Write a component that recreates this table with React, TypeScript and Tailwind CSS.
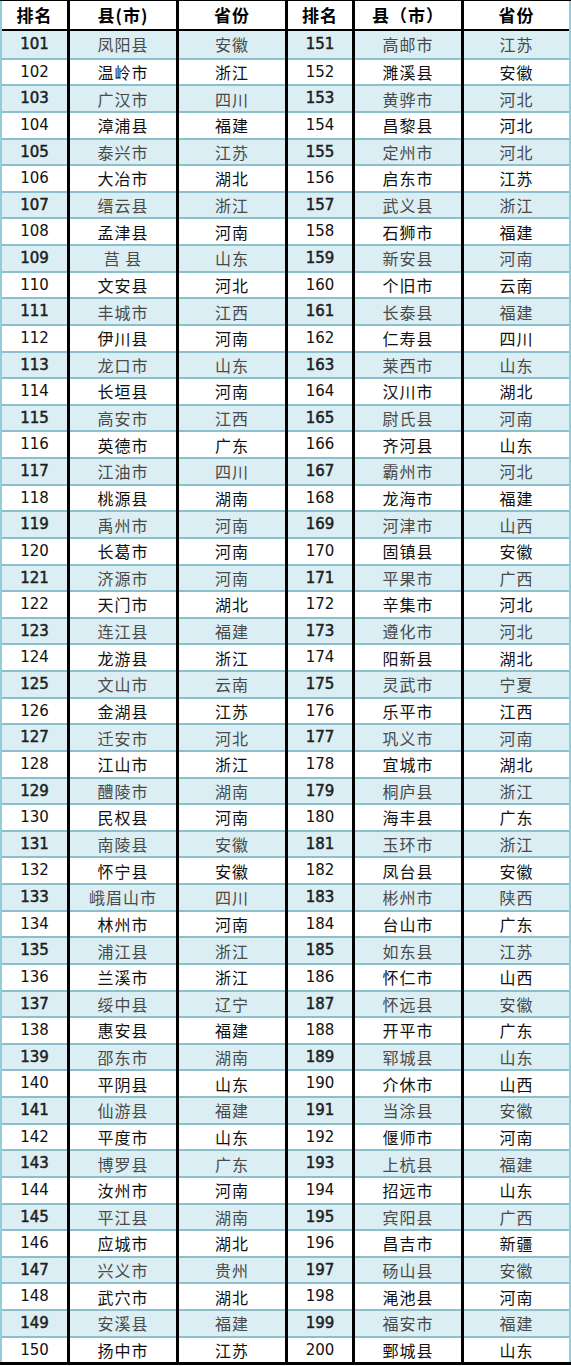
const left: [string, string, string][] = [
  ['101', '凤阳县', '安徽'], ['102', '温岭市', '浙江'], ['103', '广汉市', '四川'], ['104', '漳浦县', '福建'],
  ['105', '泰兴市', '江苏'], ['106', '大冶市', '湖北'], ['107', '缙云县', '浙江'], ['108', '孟津县', '河南'],
  ['109', '莒 县', '山东'], ['110', '文安县', '河北'], ['111', '丰城市', '江西'], ['112', '伊川县', '河南'],
  ['113', '龙口市', '山东'], ['114', '长垣县', '河南'], ['115', '高安市', '江西'], ['116', '英德市', '广东'],
  ['117', '江油市', '四川'], ['118', '桃源县', '湖南'], ['119', '禹州市', '河南'], ['120', '长葛市', '河南'],
  ['121', '济源市', '河南'], ['122', '天门市', '湖北'], ['123', '连江县', '福建'], ['124', '龙游县', '浙江'],
  ['125', '文山市', '云南'], ['126', '金湖县', '江苏'], ['127', '迁安市', '河北'], ['128', '江山市', '浙江'],
  ['129', '醴陵市', '湖南'], ['130', '民权县', '河南'], ['131', '南陵县', '安徽'], ['132', '怀宁县', '安徽'],
  ['133', '峨眉山市', '四川'], ['134', '林州市', '河南'], ['135', '浦江县', '浙江'], ['136', '兰溪市', '浙江'],
  ['137', '绥中县', '辽宁'], ['138', '惠安县', '福建'], ['139', '邵东市', '湖南'], ['140', '平阴县', '山东'],
  ['141', '仙游县', '福建'], ['142', '平度市', '山东'], ['143', '博罗县', '广东'], ['144', '汝州市', '河南'],
  ['145', '平江县', '湖南'], ['146', '应城市', '湖北'], ['147', '兴义市', '贵州'], ['148', '武穴市', '湖北'],
  ['149', '安溪县', '福建'], ['150', '扬中市', '江苏'],
];

const right: [string, string, string][] = [
  ['151', '高邮市', '江苏'], ['152', '濉溪县', '安徽'], ['153', '黄骅市', '河北'], ['154', '昌黎县', '河北'],
  ['155', '定州市', '河北'], ['156', '启东市', '江苏'], ['157', '武义县', '浙江'], ['158', '石狮市', '福建'],
  ['159', '新安县', '河南'], ['160', '个旧市', '云南'], ['161', '长泰县', '福建'], ['162', '仁寿县', '四川'],
  ['163', '莱西市', '山东'], ['164', '汉川市', '湖北'], ['165', '尉氏县', '河南'], ['166', '齐河县', '山东'],
  ['167', '霸州市', '河北'], ['168', '龙海市', '福建'], ['169', '河津市', '山西'], ['170', '固镇县', '安徽'],
  ['171', '平果市', '广西'], ['172', '辛集市', '河北'], ['173', '遵化市', '河北'], ['174', '阳新县', '湖北'],
  ['175', '灵武市', '宁夏'], ['176', '乐平市', '江西'], ['177', '巩义市', '河南'], ['178', '宜城市', '湖北'],
  ['179', '桐庐县', '浙江'], ['180', '海丰县', '广东'], ['181', '玉环市', '浙江'], ['182', '凤台县', '安徽'],
  ['183', '彬州市', '陕西'], ['184', '台山市', '广东'], ['185', '如东县', '江苏'], ['186', '怀仁市', '山西'],
  ['187', '怀远县', '安徽'], ['188', '开平市', '广东'], ['189', '郓城县', '山东'], ['190', '介休市', '山西'],
  ['191', '当涂县', '安徽'], ['192', '偃师市', '河南'], ['193', '上杭县', '福建'], ['194', '招远市', '山东'],
  ['195', '宾阳县', '广西'], ['196', '昌吉市', '新疆'], ['197', '砀山县', '安徽'], ['198', '渑池县', '河南'],
  ['199', '福安市', '福建'], ['200', '鄄城县', '山东'],
];

const cjk = "font-['Noto_Sans_CJK_SC','Noto_Sans',sans-serif]";

interface ColumnProps {
  title: string;
  values: string[];
  numeric?: boolean;
  className: string;
}

function Column({ title, values, numeric, className }: ColumnProps) {
  return (
    <div className={`flex flex-col shrink-0 ${className}`}>
      <div
        className={`h-[30px] flex items-center justify-center border-b-2 border-black bg-white text-[17px] font-bold tracking-[1px] text-black ${cjk}`}
      >
        {title}
      </div>
      {values.map((v, i) => {
        const odd = i % 2 === 0;
        return (
          <div
            key={i}
            className={`h-[26.64px] flex items-center justify-center ${
              i > 0 ? 'border-t-2 border-[#8cbfcc]' : ''
            } ${odd ? 'bg-[#daeef3]' : 'bg-white'} ${
              numeric
                ? `font-['DejaVu_Sans',sans-serif] text-[15px] ${
                    odd ? 'text-[#1e1e1e] [-webkit-text-stroke:0.5px_#1e1e1e]' : 'text-[#111]'
                  }`
                : `${cjk} text-[16px] tracking-[1px] whitespace-pre ${odd ? 'text-[#4a4a4a]' : 'text-[#111]'}`
            }`}
          >
            {v}
          </div>
        );
      })}
    </div>
  );
}

export default function App() {
  return (
    <div className="w-[571px] bg-white border-t border-black">
      <div className="flex">
        <Column
          title="排名"
          values={left.map((r) => r[0])}
          numeric
          className="w-[70px] border-l-2 border-l-[#92cddc] border-r-[3px] border-r-black"
        />
        <Column title="县(市)" values={left.map((r) => r[1])} className="w-[109px] border-r-[3px] border-black" />
        <Column title="省份" values={left.map((r) => r[2])} className="w-[109px] border-r-[3px] border-black" />
        <Column
          title="排名"
          values={right.map((r) => r[0])}
          numeric
          className="w-[67px] border-r-[3px] border-black"
        />
        <Column title="县（市）" values={right.map((r) => r[1])} className="w-[109px] border-r-[3px] border-black" />
        <Column title="省份" values={right.map((r) => r[2])} className="w-[107px] border-r-2 border-[#92cddc]" />
      </div>
      <div className="h-[3px] bg-black" />
    </div>
  );
}
